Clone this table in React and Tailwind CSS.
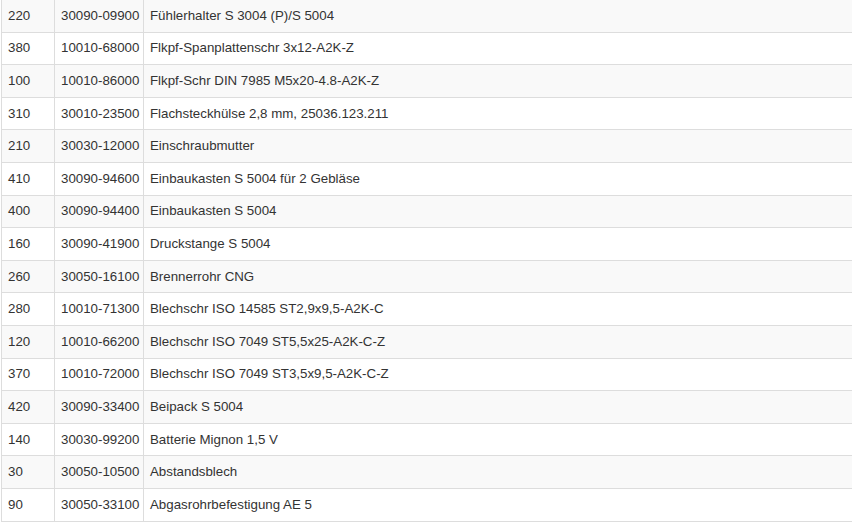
import React from 'react';

const parts = [
  ['220', '30090-09900', 'Fühlerhalter S 3004 (P)/S 5004'],
  ['380', '10010-68000', 'Flkpf-Spanplattenschr 3x12-A2K-Z'],
  ['100', '10010-86000', 'Flkpf-Schr DIN 7985 M5x20-4.8-A2K-Z'],
  ['310', '30010-23500', 'Flachsteckhülse 2,8 mm, 25036.123.211'],
  ['210', '30030-12000', 'Einschraubmutter'],
  ['410', '30090-94600', 'Einbaukasten S 5004 für 2 Gebläse'],
  ['400', '30090-94400', 'Einbaukasten S 5004'],
  ['160', '30090-41900', 'Druckstange S 5004'],
  ['260', '30050-16100', 'Brennerrohr CNG'],
  ['280', '10010-71300', 'Blechschr ISO 14585 ST2,9x9,5-A2K-C'],
  ['120', '10010-66200', 'Blechschr ISO 7049 ST5,5x25-A2K-C-Z'],
  ['370', '10010-72000', 'Blechschr ISO 7049 ST3,5x9,5-A2K-C-Z'],
  ['420', '30090-33400', 'Beipack S 5004'],
  ['140', '30030-99200', 'Batterie Mignon 1,5 V'],
  ['30', '30050-10500', 'Abstandsblech'],
  ['90', '30050-33100', 'Abgasrohrbefestigung AE 5'],
];

const App = () => {
  const cellClasses = "border border-[#dddddd] px-[6px] py-0 align-middle whitespace-nowrap";

  return (
    <div className="min-h-screen bg-white pl-px overflow-hidden font-['Liberation_Sans',Arial,sans-serif] text-[13.3px] text-[#333333]">
      <table className="w-[860px] -mt-px border-collapse table-fixed">
        <colgroup>
          <col className="w-[53px]" />
          <col className="w-[89px]" />
          <col />
        </colgroup>
        <tbody>
          {parts.map((row, index) => (
            <tr key={row[1] + index} className={`h-[32.6px] ${index % 2 === 0 ? 'bg-[#f9f9f9]' : 'bg-white'}`}>
              <td className={cellClasses}>{row[0]}</td>
              <td className={cellClasses}>{row[1]}</td>
              <td className={cellClasses}>{row[2]}</td>
            </tr>
          ))}
        </tbody>
      </table>
    </div>
  );
};

export default App;
